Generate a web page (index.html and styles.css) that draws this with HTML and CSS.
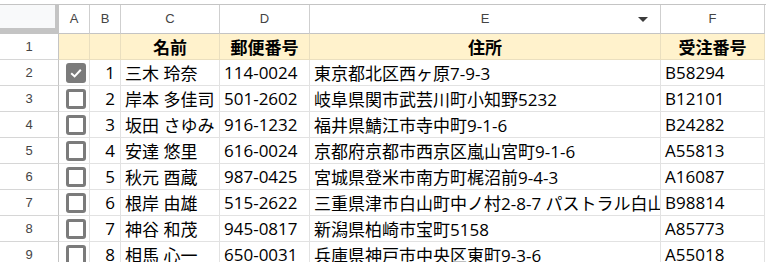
FILE: index.html
```html
<!DOCTYPE html>
<html lang="ja">
<head>
<meta charset="utf-8">
<link rel="stylesheet" href="styles.css">
</head>
<body>
<div class="sheet">
  <div class="row colhead">
    <div class="corner"><div class="corner-fill"></div></div>
    <div class="ch">A</div>
    <div class="ch">B</div>
    <div class="ch">C</div>
    <div class="ch">D</div>
    <div class="ch ch-filter">E<span class="arrow"></span></div>
    <div class="ch">F</div>
  </div>
  <div class="row head">
    <div class="rh">1</div>
    <div class="hc"></div>
    <div class="hc"></div>
    <div class="hc">名前</div>
    <div class="hc">郵便番号</div>
    <div class="hc">住所</div>
    <div class="hc">受注番号</div>
  </div>
  <div class="row">
    <div class="rh">2</div>
    <div class="c cb"><span class="box checked"><svg viewBox="0 0 14 14" width="14" height="14"><path d="M2.2 7.2 L5.6 10.4 L11.8 3.8" fill="none" stroke="#fff" stroke-width="2"/></svg></span></div>
    <div class="c num">1</div>
    <div class="c">三木 玲奈</div>
    <div class="c">114-0024</div>
    <div class="c">東京都北区西ヶ原7-9-3</div>
    <div class="c">B58294</div>
  </div>
  <div class="row">
    <div class="rh">3</div>
    <div class="c cb"><span class="box"></span></div>
    <div class="c num">2</div>
    <div class="c">岸本 多佳司</div>
    <div class="c">501-2602</div>
    <div class="c">岐阜県関市武芸川町小知野5232</div>
    <div class="c">B12101</div>
  </div>
  <div class="row">
    <div class="rh">4</div>
    <div class="c cb"><span class="box"></span></div>
    <div class="c num">3</div>
    <div class="c">坂田 さゆみ</div>
    <div class="c">916-1232</div>
    <div class="c">福井県鯖江市寺中町9-1-6</div>
    <div class="c">B24282</div>
  </div>
  <div class="row">
    <div class="rh">5</div>
    <div class="c cb"><span class="box"></span></div>
    <div class="c num">4</div>
    <div class="c">安達 悠里</div>
    <div class="c">616-0024</div>
    <div class="c">京都府京都市西京区嵐山宮町9-1-6</div>
    <div class="c">A55813</div>
  </div>
  <div class="row">
    <div class="rh">6</div>
    <div class="c cb"><span class="box"></span></div>
    <div class="c num">5</div>
    <div class="c">秋元 酉蔵</div>
    <div class="c">987-0425</div>
    <div class="c">宮城県登米市南方町梶沼前9-4-3</div>
    <div class="c">A16087</div>
  </div>
  <div class="row">
    <div class="rh">7</div>
    <div class="c cb"><span class="box"></span></div>
    <div class="c num">6</div>
    <div class="c">根岸 由雄</div>
    <div class="c">515-2622</div>
    <div class="c">三重県津市白山町中ノ村2-8-7 パストラル白山</div>
    <div class="c">B98814</div>
  </div>
  <div class="row">
    <div class="rh">8</div>
    <div class="c cb"><span class="box"></span></div>
    <div class="c num">7</div>
    <div class="c">神谷 和茂</div>
    <div class="c">945-0817</div>
    <div class="c">新潟県柏崎市宝町5158</div>
    <div class="c">A85773</div>
  </div>
  <div class="row">
    <div class="rh">9</div>
    <div class="c cb"><span class="box"></span></div>
    <div class="c num">8</div>
    <div class="c">相馬 心一</div>
    <div class="c">650-0031</div>
    <div class="c">兵庫県神戸市中央区東町9-3-6</div>
    <div class="c">A55018</div>
  </div>
</div>
</body>
</html>
```

FILE: styles.css
```css
* { box-sizing: border-box; }
html, body { margin: 0; padding: 0; background: #fff; }
body { overflow: hidden; width: 766px; height: 262px; }

.sheet {
  padding-top: 4px;
  font-family: "Open Sans", "Noto Sans CJK JP", sans-serif;
  font-size: 17px;
  color: #000;
}

.row {
  display: grid;
  grid-template-columns: 59px 31px 31px 99px 90px 351px 104px;
  height: 26px;
}

.colhead {
  height: 30px;
  border-top: 1px solid #c4c4c4;
}

.corner {
  background: #c4c4c4;
  display: flex;
}
.corner-fill {
  flex: 1;
  background: #f8f9fa;
  margin: 0 4px 6px 0;
}

.ch {
  position: relative;
  display: flex;
  align-items: center;
  justify-content: center;
  font-family: "Liberation Sans", Arial, sans-serif;
  font-size: 13px;
  color: #444;
  border-right: 1px solid #cfcfcf;
  border-bottom: 1px solid #c4c4c4;
  padding-bottom: 1px;
}

.arrow {
  position: absolute;
  right: 12px;
  top: 12px;
  width: 0;
  height: 0;
  border-left: 5px solid transparent;
  border-right: 5px solid transparent;
  border-top: 5px solid #3c3c3c;
}

.rh {
  display: flex;
  align-items: center;
  justify-content: center;
  font-family: "Liberation Sans", Arial, sans-serif;
  font-size: 13px;
  color: #444;
  border-right: 1px solid #c4c4c4;
  border-bottom: 1px solid #d6d6d6;
  background: #fff;
}

.hc {
  display: flex;
  align-items: center;
  justify-content: center;
  background: #fff2cc;
  border-right: 1px solid #eadfbf;
  border-bottom: 1px solid #eadfbf;
  font-weight: 700;
  white-space: nowrap;
  overflow: hidden;
}

.c {
  display: flex;
  align-items: center;
  padding-left: 4px;
  border-right: 1px solid #e2e2e2;
  border-bottom: 1px solid #e2e2e2;
  white-space: nowrap;
  overflow: hidden;
}

.num {
  justify-content: flex-end;
  padding-left: 0;
  padding-right: 5px;
}

.cb {
  padding-left: 7px;
}

.box {
  width: 20px;
  height: 20px;
  border: 3px solid #7b7b7b;
  border-radius: 3px;
  display: flex;
  align-items: center;
  justify-content: center;
  margin-top: 1px;
}
.box.checked {
  background: #7b7b7b;
}
```
